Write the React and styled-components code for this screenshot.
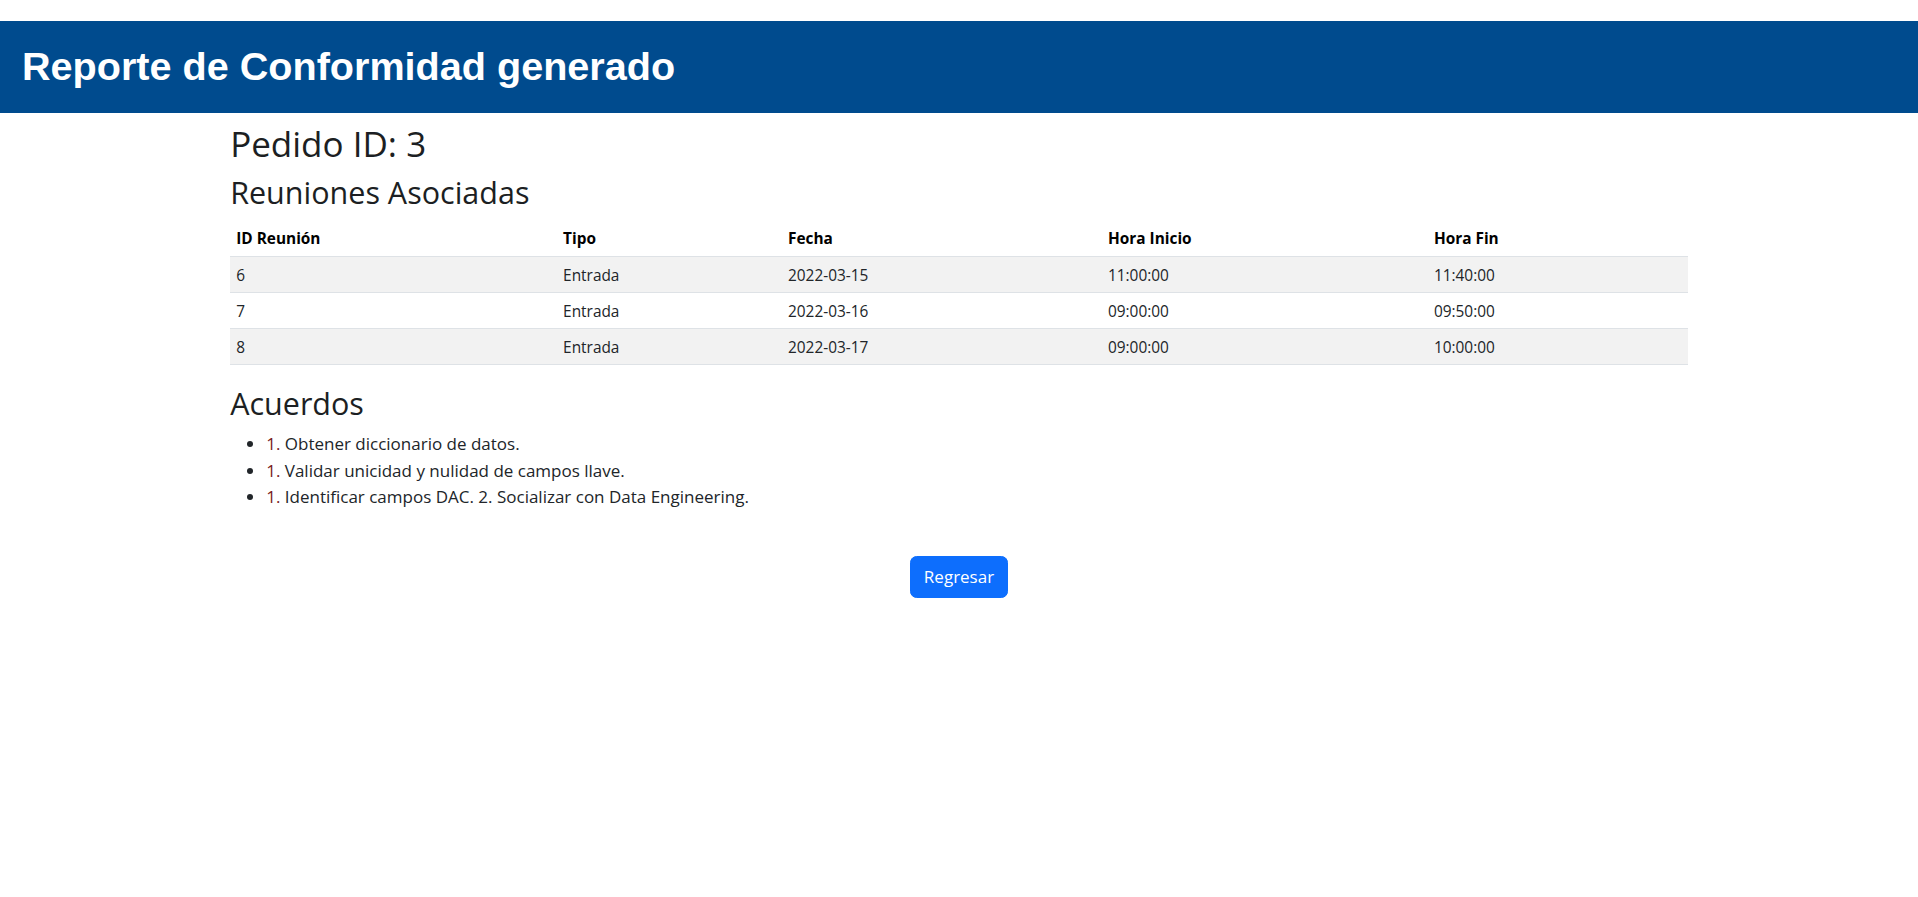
import styled, { createGlobalStyle } from "styled-components";

const GlobalStyle = createGlobalStyle`
  body {
    margin: 0;
    background: #fff;
    color: #212529;
    font-family: "Open Sans", "Noto Sans", sans-serif;
  }
`;

const Header = styled.header`
  margin-top: 21px;
  background-color: #004b8e;
  padding: 22px 22px 24px;
`;

const Title = styled.h1`
  margin: 0;
  color: #fff;
  font-family: "Liberation Sans", Arial, sans-serif;
  font-weight: 700;
  font-size: 39.6px;
  line-height: 46px;
`;

const Container = styled.main`
  width: 76%;
  margin: 0 auto;
  padding-top: 10px;
`;

const OrderTitle = styled.h2`
  margin: 0 0 9px;
  font-size: 35px;
  font-weight: 500;
  line-height: 1.2;
  color: #1c1f23;
`;

const SectionTitle = styled.h3`
  margin: ${(p) => p.$top || 0}px 0 ${(p) => p.$bottom || 0}px;
  font-size: 30.5px;
  font-weight: 500;
  line-height: 1.2;
  color: #1c1f23;
`;

const Table = styled.table`
  width: 100%;
  border-collapse: collapse;
  table-layout: fixed;
  font-size: 15.4px;
  line-height: 1.5;
`;

const Col = styled.col`
  width: ${(p) => p.$w};
`;

const Th = styled.th`
  text-align: left;
  font-weight: 700;
  color: #000;
  padding: 7px 6px 5.8px;
  border-bottom: 1px solid #dee2e6;
`;

const Row = styled.tr`
  background-color: ${(p) => (p.$striped ? "#f2f2f2" : "#fff")};
`;

const Td = styled.td`
  padding: 7.2px 6px 5px;
  color: #212529;
  border-bottom: 1px solid #dee2e6;
`;

const List = styled.ul`
  margin: 0;
  padding-left: 36px;
  font-size: 17px;
  line-height: 26.4px;
`;

const Num = styled.span`
  color: #7a2020;
`;

const Actions = styled.div`
  display: flex;
  justify-content: center;
  margin-top: 45px;
`;

const Button = styled.button`
  font-family: "Open Sans", "Noto Sans", sans-serif;
  font-size: 17px;
  line-height: 26.4px;
  padding: 6.8px 13px;
  color: #fff;
  background-color: #0d6efd;
  border: 1px solid #0d6efd;
  border-radius: 6.6px;
  cursor: pointer;
`;

const reuniones = [
  { id: 6, tipo: "Entrada", fecha: "2022-03-15", inicio: "11:00:00", fin: "11:40:00" },
  { id: 7, tipo: "Entrada", fecha: "2022-03-16", inicio: "09:00:00", fin: "09:50:00" },
  { id: 8, tipo: "Entrada", fecha: "2022-03-17", inicio: "09:00:00", fin: "10:00:00" },
];

const acuerdos = [
  { num: "1.", text: " Obtener diccionario de datos." },
  { num: "1.", text: " Validar unicidad y nulidad de campos llave." },
  { num: "1.", text: " Identificar campos DAC. 2. Socializar con Data Engineering." },
];

const App = () => {
  return (
    <>
      <GlobalStyle />
      <Header>
        <Title>Reporte de Conformidad generado</Title>
      </Header>
      <Container>
        <OrderTitle>Pedido ID: 3</OrderTitle>
        <SectionTitle $bottom={9}>Reuniones Asociadas</SectionTitle>
        <Table>
          <colgroup>
            <Col $w="22.43%" />
            <Col $w="15.43%" />
            <Col $w="21.95%" />
            <Col $w="22.36%" />
            <Col $w="17.83%" />
          </colgroup>
          <thead>
            <tr>
              <Th>ID Reunión</Th>
              <Th>Tipo</Th>
              <Th>Fecha</Th>
              <Th>Hora Inicio</Th>
              <Th>Hora Fin</Th>
            </tr>
          </thead>
          <tbody>
            {reuniones.map((r, i) => (
              <Row key={r.id} $striped={i % 2 === 0}>
                <Td>{r.id}</Td>
                <Td>{r.tipo}</Td>
                <Td>{r.fecha}</Td>
                <Td>{r.inicio}</Td>
                <Td>{r.fin}</Td>
              </Row>
            ))}
          </tbody>
        </Table>
        <SectionTitle $top={20} $bottom={9.5}>Acuerdos</SectionTitle>
        <List>
          {acuerdos.map((a, i) => (
            <li key={i}>
              <Num>{a.num}</Num>
              {a.text}
            </li>
          ))}
        </List>
        <Actions>
          <Button>Regresar</Button>
        </Actions>
      </Container>
    </>
  );
};

export default App;
